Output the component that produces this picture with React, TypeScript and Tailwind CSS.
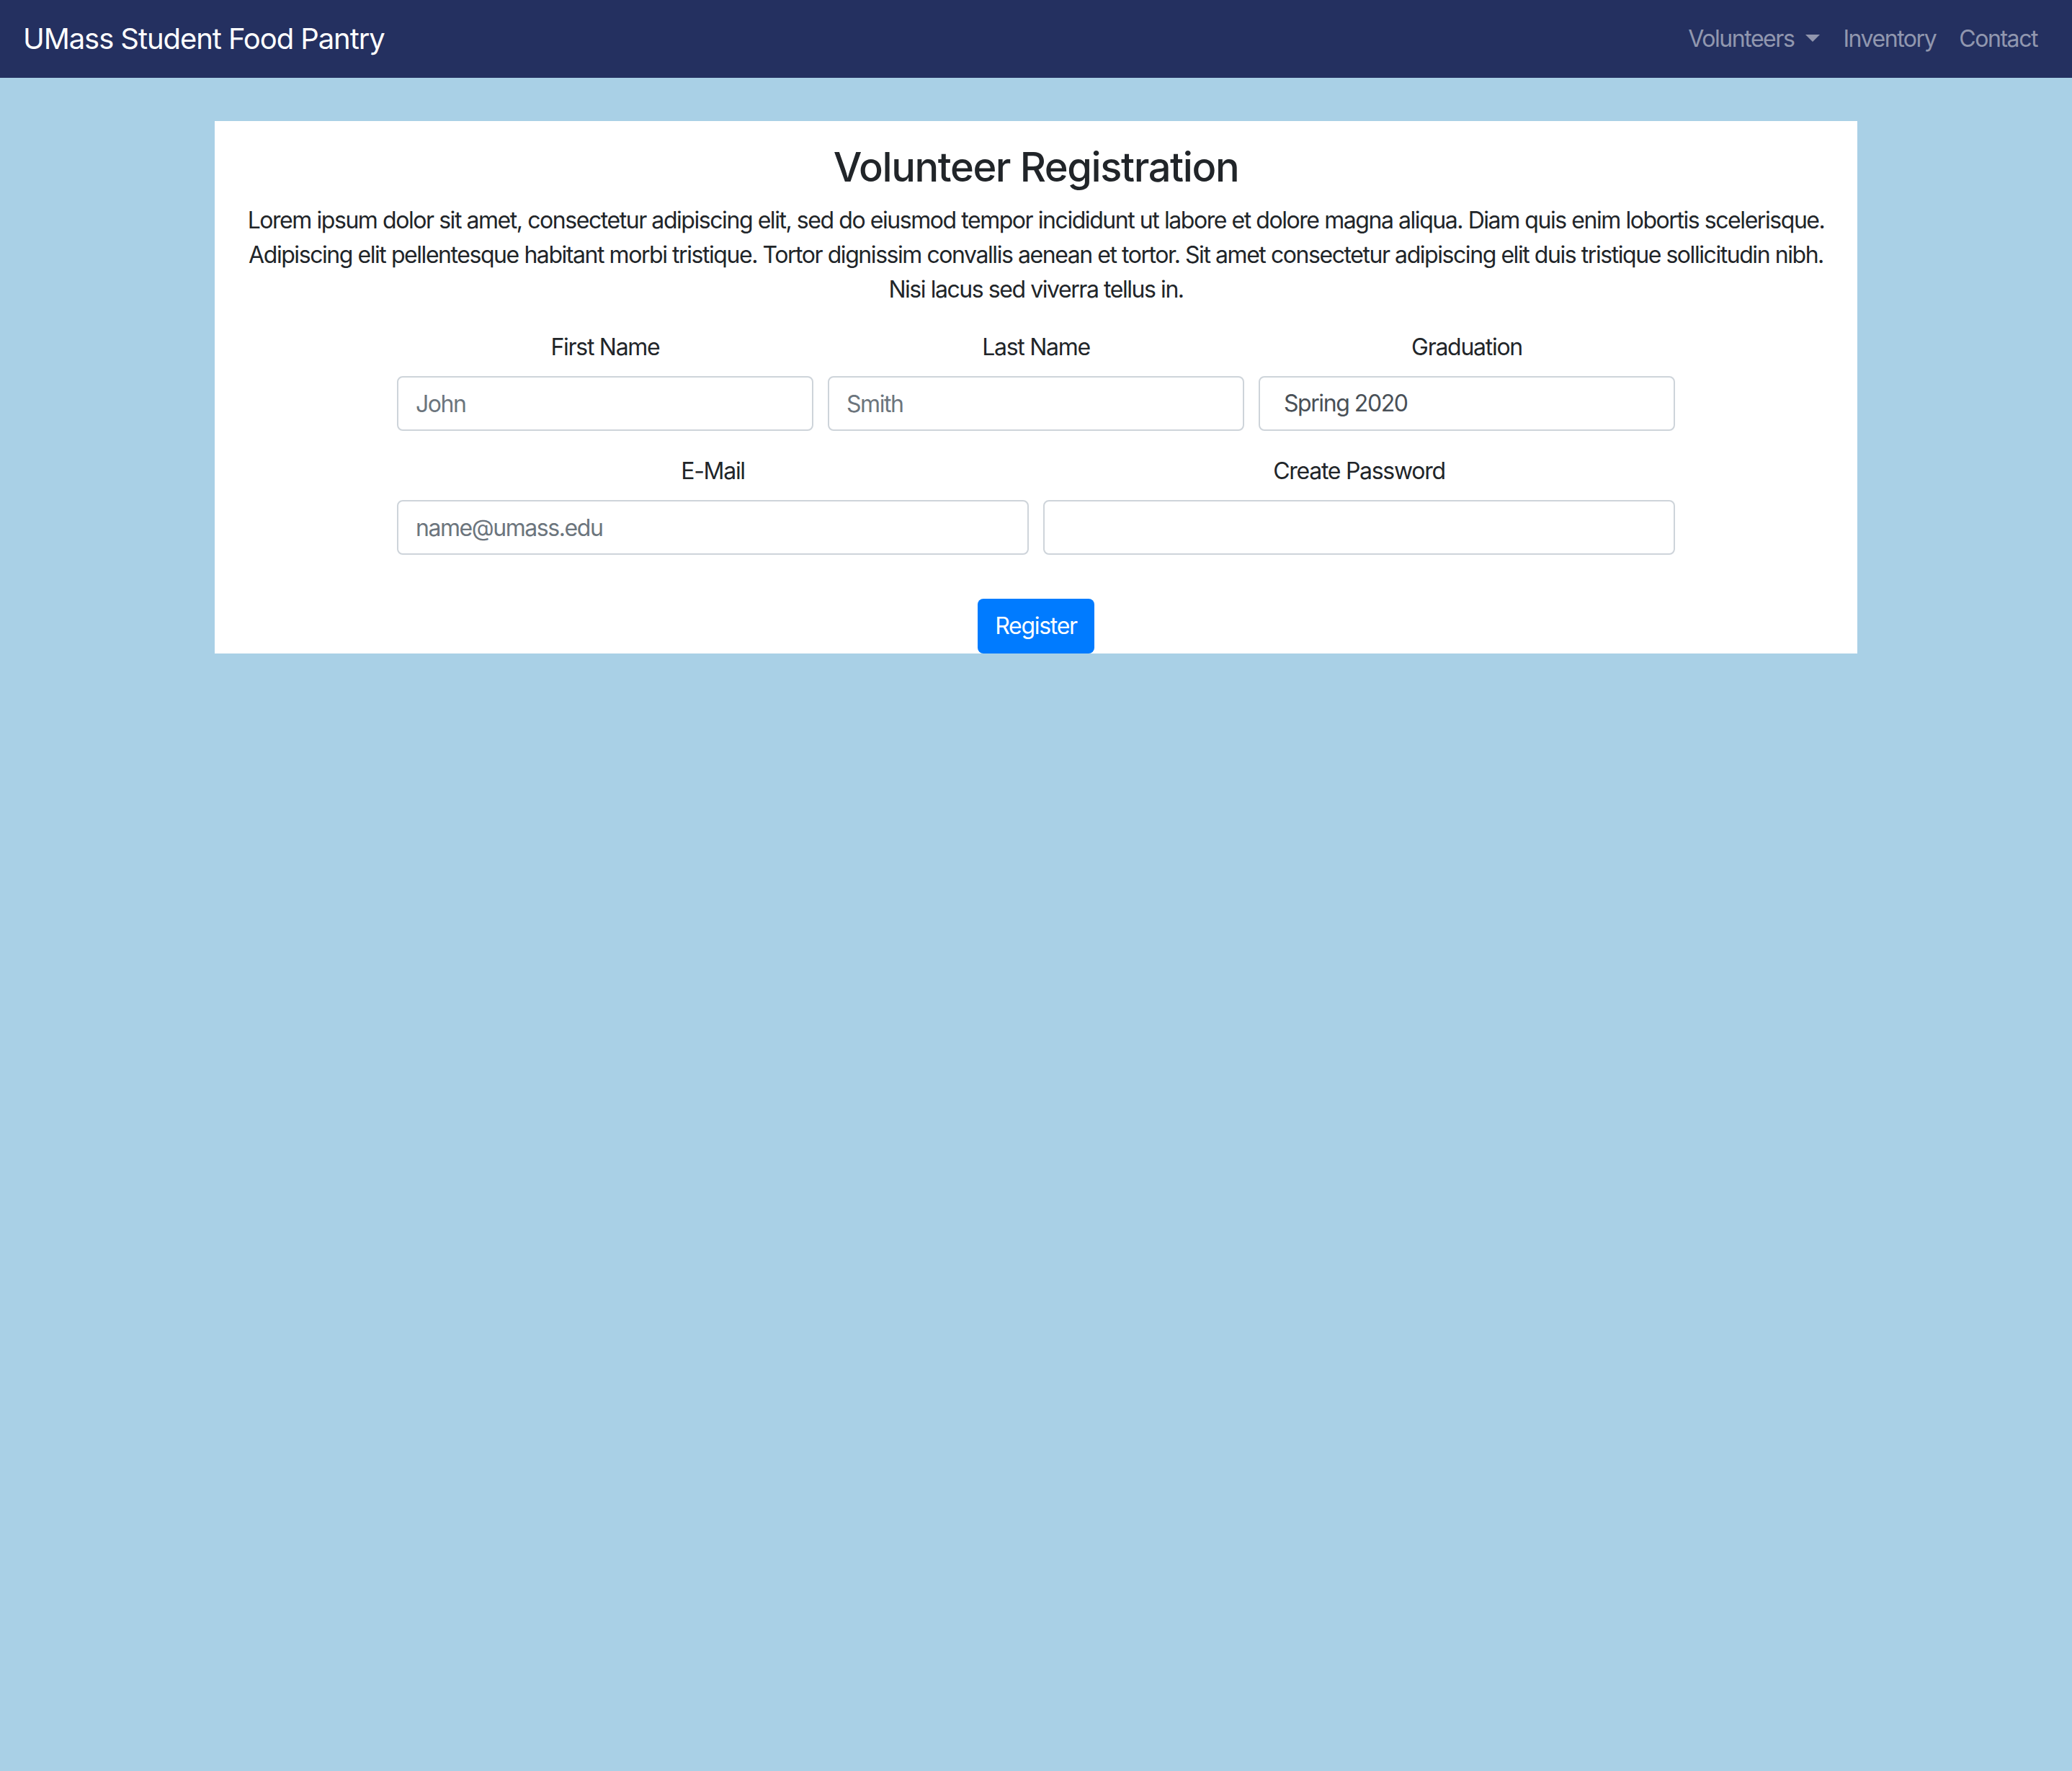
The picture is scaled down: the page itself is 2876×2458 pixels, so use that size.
import { useState } from "react";

const Navbar = () => {
  return (
    <nav className="flex h-[108px] items-center justify-between bg-[#243060] px-[32px]">
      <a href="#" className="text-[40px] leading-[60px] tracking-[-0.027em] text-white">
        UMass Student Food Pantry
      </a>
      <ul className="flex items-center">
        <li className="flex items-center px-[16px] text-[32px] leading-[48px] tracking-[-0.045em] text-white/50">
          Volunteers
          <span className="ml-[16px] mt-[-2px] h-0 w-0 border-x-[10px] border-t-[10px] border-x-transparent border-t-[#9196ae]"></span>
        </li>
        <li className="px-[16px] text-[32px] leading-[48px] tracking-[-0.045em] text-white/50">Inventory</li>
        <li className="px-[16px] text-[32px] leading-[48px] tracking-[-0.045em] text-white/50">Contact</li>
      </ul>
    </nav>
  );
};

const Field = (props: { label: string; children: any }) => {
  return (
    <div className="mb-[32px] px-[10px]">
      <label className="mb-[16px] block text-[32px] leading-[48px] tracking-[-0.04em] text-[#212529]">{props.label}</label>
      {props.children}
    </div>
  );
};

const inputCls =
  "h-[76px] w-full rounded-[8px] border-2 border-[#ced4da] bg-white px-[24px] text-[32px] tracking-[-0.045em] text-[#495057] outline-none placeholder:text-[#6c757d]";

const App = () => {
  const [form, setForm] = useState({ first: "", last: "", grad: "Spring 2020", email: "", password: "" });

  function fillForm(e: React.ChangeEvent<HTMLInputElement | HTMLSelectElement>) {
    setForm({ ...form, [e.target.name]: e.target.value });
  }

  return (
    <div className="min-h-screen bg-[#a9d0e6] font-['Inter',sans-serif] text-[#212529]">
      <Navbar />
      <div className="mx-auto mt-[60px] w-[2280px] bg-white px-[30px] pt-[31px] text-center">
        <h3 className="mb-[16px] text-[56px] font-medium leading-[1.2] tracking-[-0.025em]">Volunteer Registration</h3>
        <p className="mb-[32px] whitespace-nowrap text-[32px] leading-[48px] tracking-[-0.045em]">
          Lorem ipsum dolor sit amet, consectetur adipiscing elit, sed do eiusmod tempor incididunt ut labore et dolore magna aliqua. Diam quis enim lobortis scelerisque.
          <br />
          Adipiscing elit pellentesque habitant morbi tristique. Tortor dignissim convallis aenean et tortor. Sit amet consectetur adipiscing elit duis tristique sollicitudin nibh.
          <br />
          Nisi lacus sed viverra tellus in.
        </p>

        <form className="mx-auto w-[1794px]" onSubmit={(e) => e.preventDefault()}>
          <div className="grid grid-cols-3">
            <Field label="First Name">
              <input type="text" name="first" placeholder="John" value={form.first} onChange={fillForm} className={inputCls} />
            </Field>
            <Field label="Last Name">
              <input type="text" name="last" placeholder="Smith" value={form.last} onChange={fillForm} className={inputCls} />
            </Field>
            <Field label="Graduation">
              <select name="grad" value={form.grad} onChange={fillForm} className={inputCls + " appearance-none pl-[33px]"}>
                <option>Spring 2020</option>
                <option>Fall 2020</option>
                <option>Spring 2021</option>
              </select>
            </Field>
          </div>
          <div className="grid grid-cols-2">
            <Field label="E-Mail">
              <input type="email" name="email" placeholder="name@umass.edu" value={form.email} onChange={fillForm} className={inputCls} />
            </Field>
            <Field label="Create Password">
              <input type="password" name="password" value={form.password} onChange={fillForm} className={inputCls} />
            </Field>
          </div>
          <div className="flex justify-center pt-[29px]">
            <button type="submit" className="h-[76px] rounded-[8px] bg-[#007bff] px-[24px] text-[32px] leading-[48px] tracking-[-0.04em] text-white">
              Register
            </button>
          </div>
        </form>
      </div>
    </div>
  );
};

export default App;
